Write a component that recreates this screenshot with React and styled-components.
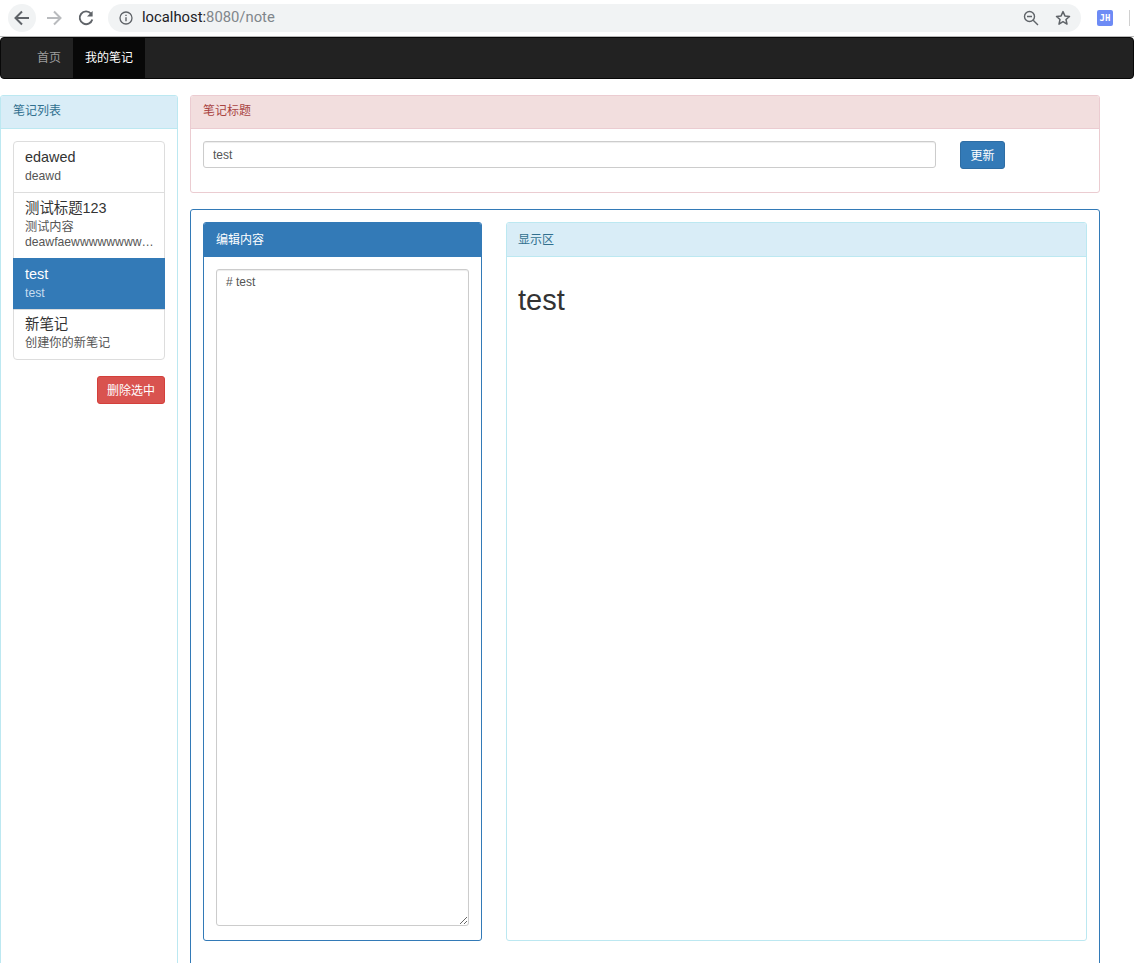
import React from "react";
import styled, { createGlobalStyle } from "styled-components";

const Global = createGlobalStyle`
  html, body { margin: 0; padding: 0; background: #fff; }
  body { font-family: "Liberation Sans", "Noto Sans CJK SC", sans-serif; font-size: 12px; line-height: 1.42857; color: #333; }
  * { box-sizing: border-box; }
`;

const Page = styled.div`
  width: 1134px;
  height: 963px;
  overflow: hidden;
`;

const BrowserBar = styled.div`
  height: 37px;
  display: flex;
  align-items: center;
  background: #fff;
  border-bottom: 1px solid #b8b8b8;
  padding: 0 0 1px 8px;
`;

const RoundBtn = styled.div`
  width: 28px;
  height: 28px;
  flex: none;
  border-radius: 50%;
  display: flex;
  align-items: center;
  justify-content: center;
  background: ${(p) => (p.$hover ? "#f1f3f4" : "transparent")};
  margin-right: ${(p) => p.$mr || 0}px;
`;

const Omnibox = styled.div`
  width: 973px;
  height: 28px;
  flex: none;
  margin-left: 8px;
  border-radius: 14px;
  background: #f1f3f4;
  display: flex;
  align-items: center;
  padding: 0 10px 0 11px;
`;

const UrlText = styled.div`
  flex: 1;
  margin-left: 9px;
  font-family: "Roboto", "Liberation Sans", sans-serif;
  font-size: 14.8px;
  color: #80868b;
  span { color: #202124; }
`;

const Badge = styled.div`
  width: 16px;
  height: 16px;
  flex: none;
  margin-left: 16px;
  border-radius: 2px;
  background: #6d8bf5;
  color: #fff;
  font-family: "DejaVu Sans Mono", monospace;
  font-size: 9px;
  font-weight: 700;
  line-height: 16px;
  text-align: center;
`;

const BarDivider = styled.div`
  width: 1px;
  height: 16px;
  flex: none;
  margin-left: 16px;
  background: #d0d0d0;
`;

const Navbar = styled.nav`
  height: 42px;
  background: #222;
  border: 1px solid #080808;
  border-radius: 4px;
  display: flex;
  padding-left: 24px;
`;

const NavLink = styled.a`
  display: block;
  height: 40px;
  padding: 0 12px;
  line-height: 40px;
  font-size: 12px;
  color: ${(p) => (p.$active ? "#fff" : "#9d9d9d")};
  background: ${(p) => (p.$active ? "#080808" : "transparent")};
`;

const Content = styled.div`
  display: flex;
  align-items: flex-start;
  gap: 12px;
  padding-top: 16px;
`;

const Panel = styled.section`
  border: 1px solid ${(p) => p.$border};
  border-radius: 3px;
  background: #fff;
`;

const PanelHead = styled.div`
  height: ${(p) => p.$h || 33}px;
  padding: 0 12px 0 ${(p) => p.$pl || 12}px;
  line-height: ${(p) => p.$lh || 30}px;
  font-size: 12px;
  color: ${(p) => p.$color};
  background: ${(p) => p.$bg};
  border-bottom: 1px solid ${(p) => p.$border};
  border-radius: 2px 2px 0 0;
`;

const Sidebar = styled(Panel)`
  width: 178px;
  height: 900px;
  flex: none;
`;

const SideBody = styled.div`
  padding: 12px;
  display: flex;
  flex-direction: column;
  align-items: flex-end;
`;

const ListGroup = styled.div`
  width: 152px;
  margin-bottom: 17px;
`;

const ListItem = styled.div`
  padding: 6px 5px 8px 11px;
  margin-bottom: -1px;
  background: ${(p) => (p.$active ? "#337ab7" : "#fff")};
  border: 1px solid ${(p) => (p.$active ? "#337ab7" : "#ddd")};
  position: relative;
  &:first-child { border-radius: 4px 4px 0 0; }
  &:last-child { border-radius: 0 0 4px 4px; padding-top: 5px; }
`;

const ItemTitle = styled.div`
  font-size: 14.4px;
  line-height: 19px;
  height: 20px;
  color: ${(p) => (p.$active ? "#fff" : "#333")};
`;

const ItemText = styled.div`
  font-size: 12.2px;
  line-height: 15px;
  margin-top: ${(p) => p.$mt}px;
  color: ${(p) => (p.$active ? "#c7ddef" : "#555")};
  overflow: hidden;
  text-overflow: ellipsis;
  white-space: nowrap;
`;

const Button = styled.button`
  font-family: inherit;
  font-size: 12px;
  color: #fff;
  border: 1px solid ${(p) => p.$border};
  background: ${(p) => p.$bg};
  border-radius: 3px;
  padding: 0 0 2px;
  width: ${(p) => p.$w}px;
  height: 28px;
  flex: none;
`;

const Main = styled.div`
  width: 910px;
  flex: none;
  display: flex;
  flex-direction: column;
  gap: 16px;
`;

const TitleBody = styled.div`
  display: flex;
  align-items: flex-start;
  padding: 12px 12px 23px;
`;

const TitleInput = styled.input`
  width: 733px;
  height: 27px;
  flex: none;
  margin-right: 24px;
  padding: 0 9px;
  font: inherit;
  font-size: 12px;
  color: #555;
  border: 1px solid #ccc;
  border-radius: 3px;
  box-shadow: inset 0 1px 1px rgba(0, 0, 0, 0.075);
`;

const EditorCard = styled(Panel)`
  height: 800px;
  padding: 12px;
  display: flex;
  align-items: flex-start;
  gap: 24px;
`;

const EditPanel = styled(Panel)`
  width: 279px;
  height: 719px;
  flex: none;
`;

const EditBody = styled.div`
  padding: 12px;
`;

const Area = styled.textarea`
  display: block;
  width: 253px;
  height: 657px;
  padding: 4px 9px;
  font: inherit;
  font-size: 12px;
  color: #555;
  border: 1px solid #ccc;
  border-radius: 3px;
  box-shadow: inset 0 1px 1px rgba(0, 0, 0, 0.075);
  outline: none;
`;

const ViewPanel = styled(Panel)`
  width: 581px;
  height: 719px;
  flex: none;
`;

const ViewBody = styled.div`
  padding: 12px 11px;
`;

const Heading = styled.h1`
  margin: 15px 0 0;
  font-size: 29px;
  font-weight: 500;
  line-height: 33px;
  color: #333;
`;

const notes = [
  { title: "edawed", lines: ["deawd"] },
  { title: "测试标题123", lines: ["测试内容", "deawfaewwwwwwwwwwwwwwwww"] },
  { title: "test", lines: ["test"], active: true },
  { title: "新笔记", lines: ["创建你的新笔记"] },
];

const Back = () => (
  <svg width="18" height="18" viewBox="0 0 18 18" fill="none" stroke="#5f6368" strokeWidth="2">
    <path d="M16 9H3M9 2.5 2.5 9 9 15.5" />
  </svg>
);
const Forward = () => (
  <svg width="18" height="18" viewBox="0 0 18 18" fill="none" stroke="#b9bbbe" strokeWidth="2">
    <path d="M2 9h13M9 2.5 15.5 9 9 15.5" />
  </svg>
);
const Reload = () => (
  <svg width="18" height="18" viewBox="0 0 18 18" fill="none">
    <path d="M14 4.6A6.4 6.4 0 1 0 15.3 10.5" stroke="#5f6368" strokeWidth="1.9" />
    <path d="M15.6 2v5.6H10z" fill="#5f6368" />
  </svg>
);
const Info = () => (
  <svg width="14" height="14" viewBox="0 0 14 14" fill="none" style={{ flex: "none" }}>
    <circle cx="7" cy="7" r="6" stroke="#5f6368" strokeWidth="1.3" />
    <path d="M7 6.2v4M7 3.8v1.3" stroke="#5f6368" strokeWidth="1.4" />
  </svg>
);
const ZoomOut = () => (
  <svg width="16" height="16" viewBox="0 0 16 16" fill="none" stroke="#5f6368" strokeWidth="1.4">
    <circle cx="6.5" cy="6.5" r="5" />
    <path d="M10.2 10.2 15 15M4 6.5h5" />
  </svg>
);
const Star = () => (
  <svg width="16" height="16" viewBox="0 0 16 16" fill="none" stroke="#5f6368" strokeWidth="1.5" strokeLinejoin="round" style={{ marginLeft: 16 }}>
    <path d="M8 1.6l1.9 4.3 4.6.5-3.5 3.1 1 4.6L8 11.7l-4 2.4 1-4.6L1.5 6.4l4.6-.5z" />
  </svg>
);

export default function App() {
  return (
    <Page>
      <Global />
      <BrowserBar>
        <RoundBtn $hover $mr={4}><Back /></RoundBtn>
        <RoundBtn $mr={4}><Forward /></RoundBtn>
        <RoundBtn><Reload /></RoundBtn>
        <Omnibox>
          <Info />
          <UrlText><span>localhost</span><span>:</span>8080/note</UrlText>
          <ZoomOut />
          <Star />
        </Omnibox>
        <Badge>JH</Badge>
        <BarDivider />
      </BrowserBar>
      <Navbar>
        <NavLink>首页</NavLink>
        <NavLink $active>我的笔记</NavLink>
      </Navbar>
      <Content>
        <Sidebar $border="#bce8f1">
          <PanelHead $bg="#d9edf7" $color="#31708f" $border="#bce8f1">笔记列表</PanelHead>
          <SideBody>
            <ListGroup>
              {notes.map((n) => (
                <ListItem key={n.title} $active={n.active}>
                  <ItemTitle $active={n.active}>{n.title}</ItemTitle>
                  {n.lines.map((l, j) => (
                    <ItemText key={l} $active={n.active} $mt={j === 0 ? 1 : 0}>{l}</ItemText>
                  ))}
                </ListItem>
              ))}
            </ListGroup>
            <Button $bg="#d9534f" $border="#d43f3a" $w={68}>删除选中</Button>
          </SideBody>
        </Sidebar>
        <Main>
          <Panel $border="#ebccd1">
            <PanelHead $bg="#f2dede" $color="#a94442" $border="#ebccd1">笔记标题</PanelHead>
            <TitleBody>
              <TitleInput defaultValue="test" />
              <Button $bg="#337ab7" $border="#2e6da4" $w={45}>更新</Button>
            </TitleBody>
          </Panel>
          <EditorCard $border="#337ab7">
            <EditPanel $border="#337ab7">
              <PanelHead $h={34} $lh={34} $bg="#337ab7" $color="#fff" $border="#337ab7">编辑内容</PanelHead>
              <EditBody>
                <Area defaultValue="# test" />
              </EditBody>
            </EditPanel>
            <ViewPanel $border="#bce8f1">
              <PanelHead $h={34} $lh={34} $pl={11} $bg="#d9edf7" $color="#31708f" $border="#bce8f1">显示区</PanelHead>
              <ViewBody>
                <Heading>test</Heading>
              </ViewBody>
            </ViewPanel>
          </EditorCard>
        </Main>
      </Content>
    </Page>
  );
}
